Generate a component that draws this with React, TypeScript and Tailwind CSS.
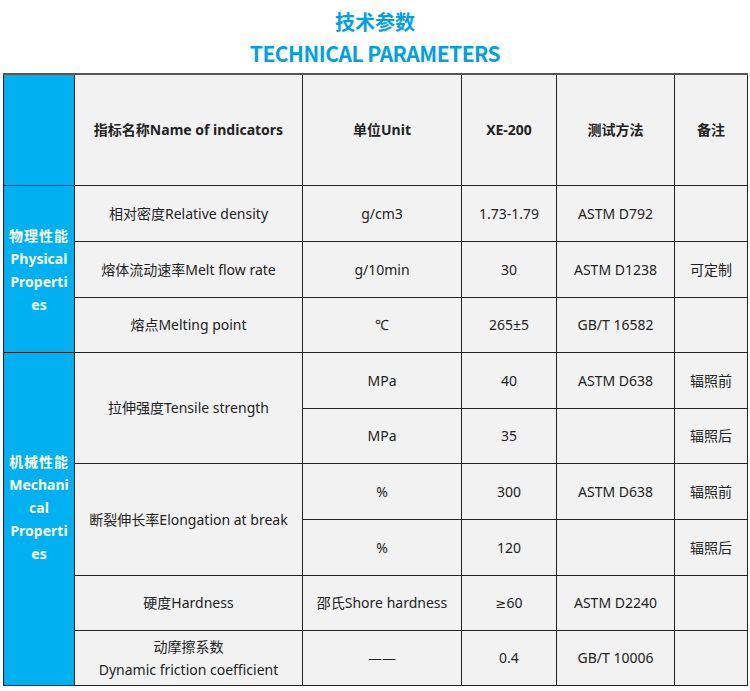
import React from "react";

const F = { fontFamily: '"Noto Sans", "Noto Sans CJK SC", sans-serif' };
const CJK = { fontFamily: '"Noto Sans CJK SC", "Noto Sans", sans-serif' };
const DV = { fontFamily: '"DejaVu Sans", sans-serif' };

const td = "border border-[#222] bg-[#f2f2f2] text-center align-middle text-[14px] text-[#222] p-0";
const blue = "border border-[#222] bg-[#00b0f0] text-center align-middle text-[14px] font-bold text-white p-0 leading-[23px]";

export default function App() {
  return (
    <div className="w-[750px] h-[691px] bg-white overflow-hidden" style={F}>
      <div className="pt-[8px] text-center text-[20px] font-bold leading-[28px] text-[#00a0e9]" style={CJK}>技术参数</div>
      <div className="pt-[2px] text-center text-[21px] font-bold leading-[30px] text-[#00a0e9] tracking-[-0.5px]" style={CJK}>TECHNICAL PARAMETERS</div>
      <table className="ml-[3px] mt-[5px] w-[744px] table-fixed border-collapse border-t-2 border-t-[#555]">
        <colgroup>
          <col className="w-[71px]" />
          <col className="w-[228px]" />
          <col className="w-[159px]" />
          <col className="w-[95px]" />
          <col className="w-[118px]" />
          <col className="w-[73px]" />
        </colgroup>
        <tbody>
          <tr className="h-[111px]">
            <td className="border border-[#222] bg-[#00b0f0] p-0" />
            <td className={td + " font-bold"}>指标名称Name of indicators</td>
            <td className={td + " font-bold"}>单位Unit</td>
            <td className={td + " font-bold"}>XE-200</td>
            <td className={td + " font-bold"}>测试方法</td>
            <td className={td + " font-bold"}>备注</td>
          </tr>
          <tr className="h-[56px]">
            <td rowSpan={3} className={blue}>
              <div className="pt-[2px]">
                <div className="tracking-[1px]">物理性能</div>
                <div>Physical</div>
                <div>Properti</div>
                <div>es</div>
              </div>
            </td>
            <td className={td}>相对密度Relative density</td>
            <td className={td}>g/cm3</td>
            <td className={td}>1.73-1.79</td>
            <td className={td}>ASTM D792</td>
            <td className={td}></td>
          </tr>
          <tr className="h-[56px]">
            <td className={td}>熔体流动速率Melt flow rate</td>
            <td className={td}>g/10min</td>
            <td className={td}>30</td>
            <td className={td}>ASTM D1238</td>
            <td className={td}>可定制</td>
          </tr>
          <tr className="h-[55px]">
            <td className={td}>熔点Melting point</td>
            <td className={td}>℃</td>
            <td className={td}>265±5</td>
            <td className={td}>GB/T 16582</td>
            <td className={td}></td>
          </tr>
          <tr className="h-[56px]">
            <td rowSpan={6} className={blue}>
              <div className="pb-[22px]">
                <div className="tracking-[1px]">机械性能</div>
                <div>Mechani</div>
                <div>cal</div>
                <div>Properti</div>
                <div>es</div>
              </div>
            </td>
            <td rowSpan={2} className={td}>拉伸强度Tensile strength</td>
            <td className={td}>MPa</td>
            <td className={td}>40</td>
            <td className={td}>ASTM D638</td>
            <td className={td}>辐照前</td>
          </tr>
          <tr className="h-[55px]">
            <td className={td}>MPa</td>
            <td className={td}>35</td>
            <td className={td}></td>
            <td className={td}>辐照后</td>
          </tr>
          <tr className="h-[56px]">
            <td rowSpan={2} className={td}>断裂伸长率Elongation at break</td>
            <td className={td}>%</td>
            <td className={td}>300</td>
            <td className={td}>ASTM D638</td>
            <td className={td}>辐照前</td>
          </tr>
          <tr className="h-[56px]">
            <td className={td}>%</td>
            <td className={td}>120</td>
            <td className={td}></td>
            <td className={td}>辐照后</td>
          </tr>
          <tr className="h-[55px]">
            <td className={td}>硬度Hardness</td>
            <td className={td}>邵氏Shore hardness</td>
            <td className={td}><span style={DV} className="text-[13px]">≥</span>60</td>
            <td className={td}>ASTM D2240</td>
            <td className={td}></td>
          </tr>
          <tr className="h-[55px]">
            <td className={td + " leading-[23px]"}>
              动摩擦系数
              <br />
              Dynamic friction coefficient
            </td>
            <td className={td}><span style={DV}>——</span></td>
            <td className={td}>0.4</td>
            <td className={td}>GB/T 10006</td>
            <td className={td}></td>
          </tr>
        </tbody>
      </table>
    </div>
  );
}
